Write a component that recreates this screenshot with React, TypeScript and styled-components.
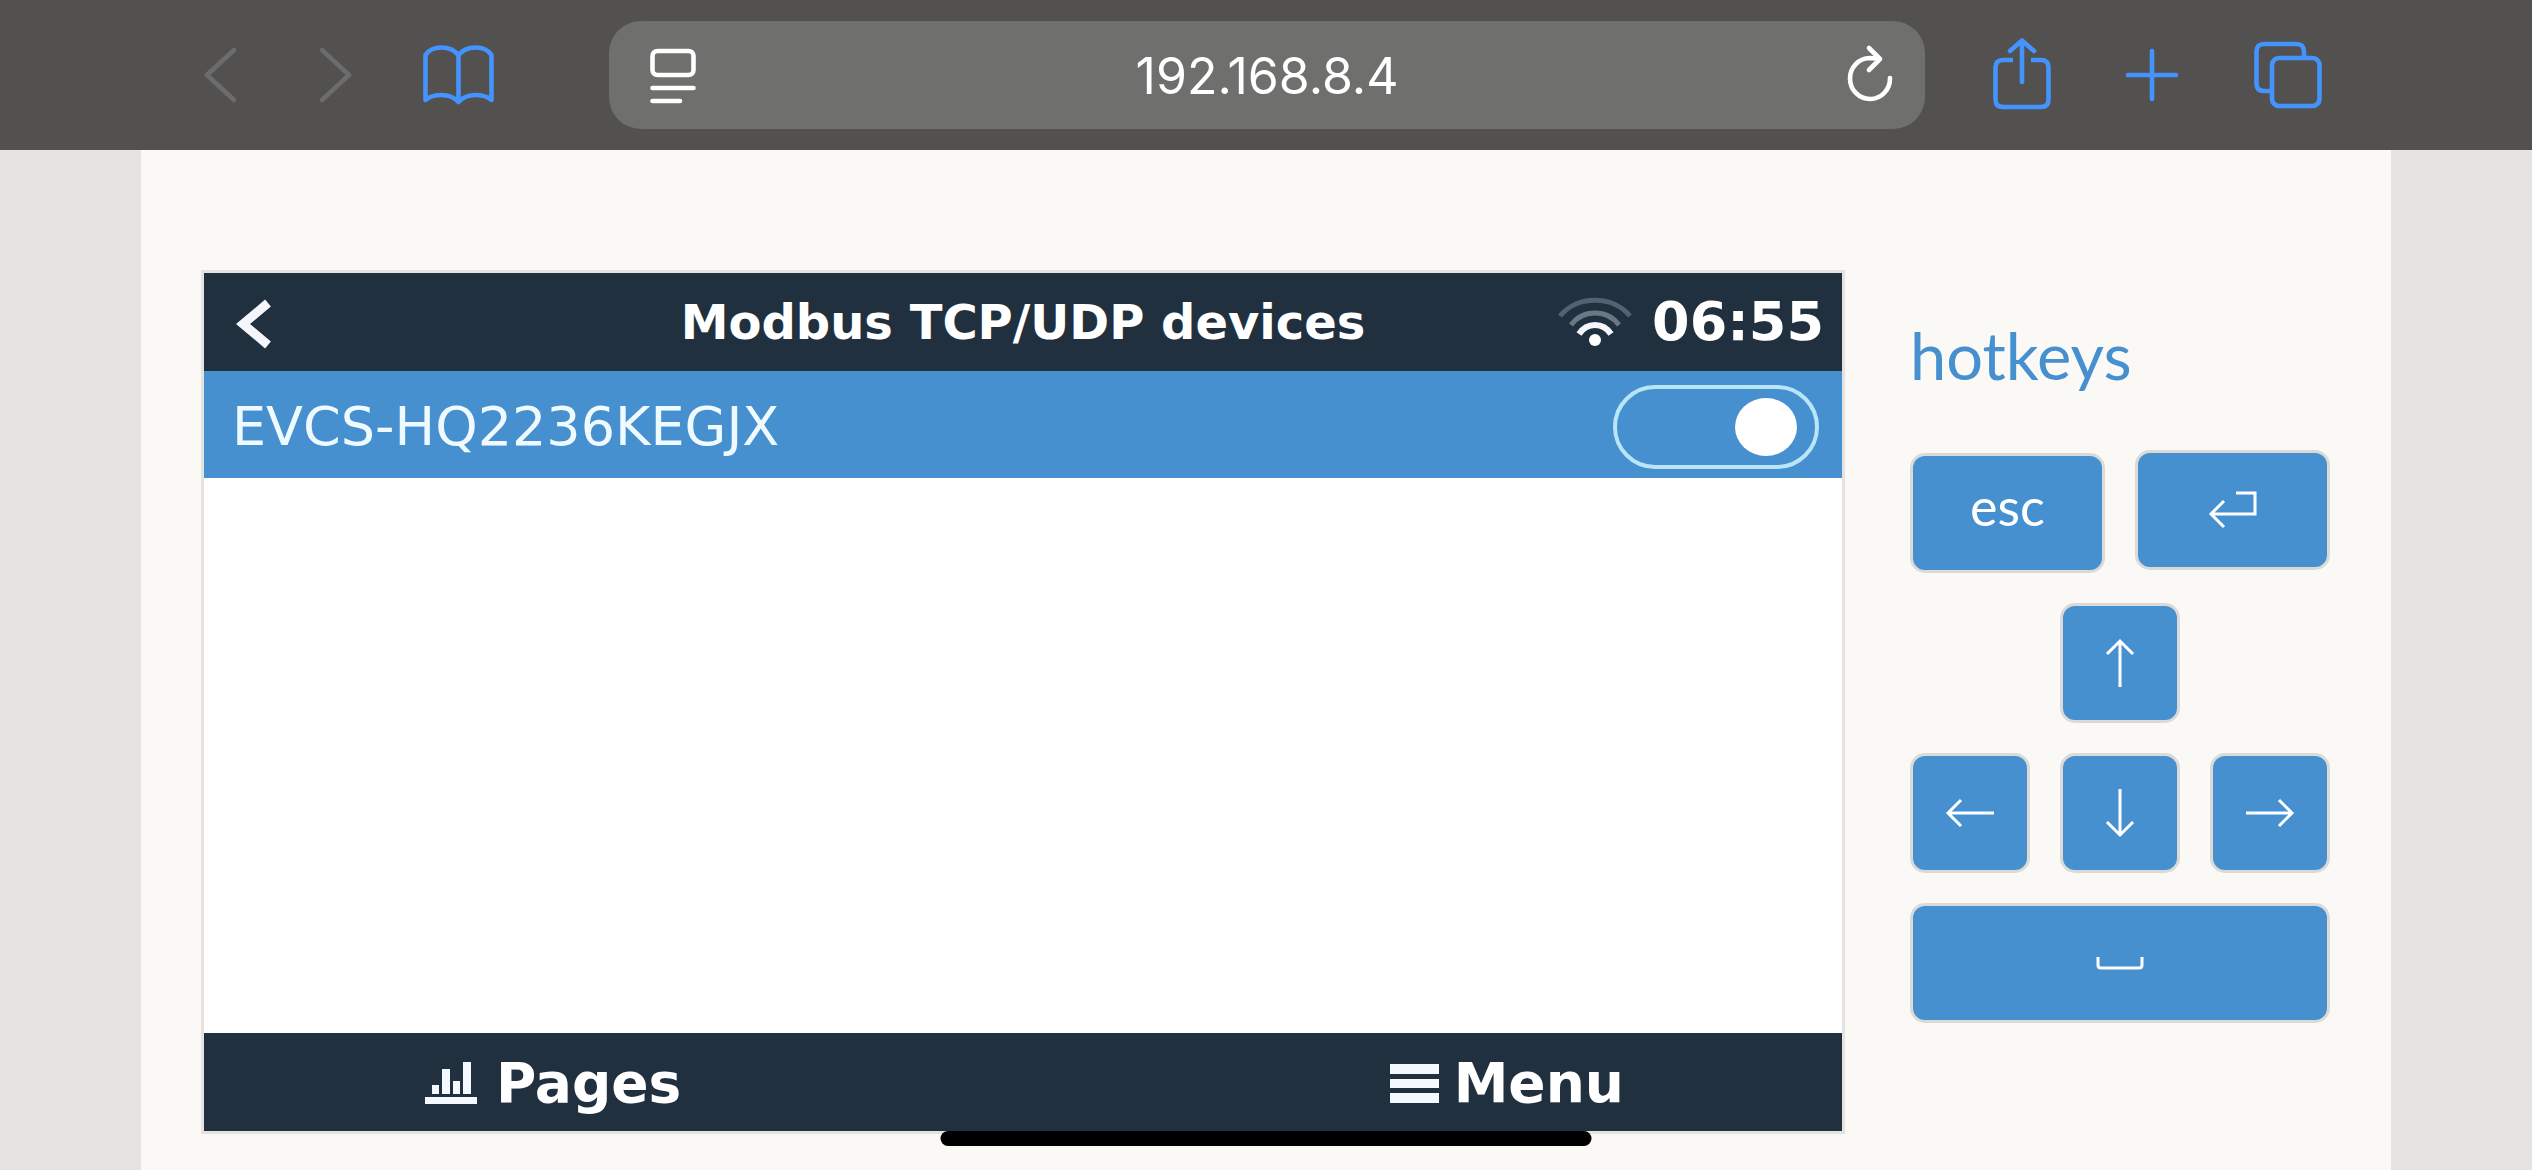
import React, { useState } from "react";
import styled, { createGlobalStyle } from "styled-components";

const color = {
  chrome: "#52514f",
  field: "#6f6f6d",
  link: "#4593fe",
  disabled: "#6c6c6c",
  page: "#e5e4e0",
  panel: "#faf9f5",
  frame: "#e4e3df",
  navy: "#21303f",
  blue: "#4690d0",
  keyBorder: "#dcdad7",
  white: "#ffffff",
};

const GlobalStyle = createGlobalStyle`
  * { box-sizing: border-box; }
  body { margin: 0; background: ${color.page}; }
  button, input { font: inherit; color: inherit; margin: 0; }
  button { padding: 0; border: 0; background: none; cursor: pointer; }
  svg { display: block; flex: none; }
`;

const Page = styled.div`
  min-height: 100vh;
  display: flex;
  flex-direction: column;
`;

/* Browser bar */

const BrowserBar = styled.header`
  height: 150px;
  padding: 0 202px 0 184px;
  display: flex;
  align-items: center;
  background: ${color.chrome};
  color: ${color.link};
`;

const IconGroup = styled.nav<{ $gap: number }>`
  display: flex;
  gap: ${(p) => p.$gap}px;
`;

const IconButton = styled.button<{ $wide?: boolean }>`
  width: ${(p) => (p.$wide ? 84 : 72)}px;
  height: 108px;
  display: flex;
  align-items: center;
  justify-content: center;

  &:disabled {
    color: ${color.disabled};
  }
`;

const AddressField = styled.div`
  flex: 1;
  min-width: 0;
  height: 108px;
  margin: 0 61px 0 109px;
  padding: 0 18px 0 28px;
  display: flex;
  align-items: center;
  border-radius: 32px;
  background: ${color.field};
  color: ${color.white};
`;

const AddressInput = styled.input`
  flex: 1;
  min-width: 0;
  height: 100%;
  padding: 2px 10px 0 0;
  border: 0;
  outline: 0;
  background: transparent;
  text-align: center;
  font-family: Inter, "Liberation Sans", sans-serif;
  font-size: 50px;
`;

const Stroke = styled.svg`
  fill: none;
  stroke: currentColor;
  stroke-width: 4.6;
  stroke-linecap: round;
  stroke-linejoin: round;
`;

/* Page content */

const Panel = styled.main`
  flex: 1;
  margin: 0 141px;
  padding: 120px 61px 36px 60px;
  display: flex;
  align-items: flex-start;
  gap: 65px;
  background: ${color.panel};
`;

const Screen = styled.section`
  flex: 1;
  min-width: 0;
  border: 3px solid ${color.frame};
  background: ${color.white};
  color: ${color.white};
  font-family: "DejaVu Sans", sans-serif;
  font-size: 54px;
`;

const ScreenHeader = styled.div`
  height: 98px;
  padding: 0 18px;
  display: grid;
  grid-template-columns: 1fr auto 1fr;
  align-items: center;
  background: ${color.navy};
`;

const BackButton = styled.button`
  justify-self: start;
  padding: 4px 14px 0;
`;

const ScreenTitle = styled.h1`
  margin: 0;
  font-size: 48px;
  line-height: 96px;
  font-weight: bold;
`;

const Status = styled.div`
  display: flex;
  align-items: center;
  justify-content: flex-end;
  gap: 20px;
  line-height: 96px;
  font-weight: bold;
`;

const DeviceList = styled.div`
  min-height: 662px;
`;

const DeviceRow = styled.label`
  height: 107px;
  padding: 4px 23px 0 28px;
  display: flex;
  align-items: center;
  justify-content: space-between;
  background: ${color.blue};
  color: #effaff;
  cursor: pointer;
`;

const Toggle = styled.input`
  appearance: none;
  width: 206px;
  height: 84px;
  padding: 0 18px;
  display: flex;
  align-items: center;
  border: 4px solid #b8e6f8;
  border-radius: 42px;

  &::before {
    content: "";
    width: 62px;
    height: 58px;
    border-radius: 50%;
    background: ${color.white};
  }

  &:checked {
    justify-content: flex-end;
  }
`;

const ScreenFooter = styled.div`
  height: 98px;
  padding: 2px 218px 0 221px;
  display: flex;
  justify-content: space-between;
  background: ${color.navy};
`;

const FooterButton = styled.button<{ $gap: number }>`
  display: flex;
  align-items: center;
  gap: ${(p) => p.$gap}px;
  font-size: 55px;
  font-weight: bold;
`;

/* Hotkeys */

const Hotkeys = styled.aside`
  width: 420px;
  padding-top: 44px;
  display: flex;
  flex-direction: column;
  gap: 30px;
  font-family: Lato, "Open Sans", sans-serif;
`;

const HotkeysTitle = styled.h2`
  margin: 0 0 24px;
  font-size: 65px;
  line-height: 82px;
  font-weight: 400;
  color: ${color.blue};
`;

const KeyRow = styled.div<{ $center?: boolean }>`
  display: flex;
  align-items: baseline;
  justify-content: ${(p) => (p.$center ? "center" : "space-between")};
`;

const keyWidth = { small: "120px", medium: "195px", full: "100%" };

const Key = styled.button<{ $size?: keyof typeof keyWidth; $text?: boolean }>`
  width: ${(p) => keyWidth[p.$size ?? "small"]};
  height: 120px;
  padding-bottom: ${(p) => (p.$text ? 14 : 0)}px;
  display: flex;
  align-items: center;
  justify-content: center;
  border: 3px solid ${color.keyBorder};
  border-radius: 15px;
  background: ${color.blue};
  color: ${color.white};
  font-size: 52px;
  line-height: 60px;
`;

const KeyIcon = styled.svg`
  overflow: visible;
  fill: none;
  stroke: currentColor;
  stroke-width: 3px;
`;

const HomeIndicator = styled.div`
  position: fixed;
  bottom: 24px;
  left: 50%;
  width: 651px;
  height: 15px;
  transform: translateX(-50%);
  border-radius: 8px;
  background: #000;
`;

const arrows = {
  Up: "M24 48V2M11 15L24 2L37 15",
  Left: "M48 24H2M15 11L2 24L15 37",
  Down: "M24 0V46M11 33L24 46L37 33",
  Right: "M0 24H46M33 11L46 24L33 37",
};

function ArrowKey({ direction }: { direction: keyof typeof arrows }) {
  return (
    <Key aria-label={direction}>
      <KeyIcon width="48" height="48" viewBox="0 0 48 48">
        <path d={arrows[direction]} />
      </KeyIcon>
    </Key>
  );
}

export default function App() {
  const [address, setAddress] = useState("192.168.8.4");
  const [enabled, setEnabled] = useState(true);

  return (
    <Page>
      <GlobalStyle />
      <BrowserBar>
        <IconGroup $gap={44} aria-label="History">
          <IconButton aria-label="Back" disabled>
            <Stroke width="32" height="74" viewBox="0 0 32 74">
              <path d="M30 12L3 37L30 62" />
            </Stroke>
          </IconButton>
          <IconButton aria-label="Forward" disabled>
            <Stroke width="32" height="74" viewBox="0 0 32 74">
              <path d="M2 12L29 37L2 62" />
            </Stroke>
          </IconButton>
          <IconButton aria-label="Bookmarks" $wide>
            <Stroke width="71" height="74" viewBox="0 0 71 74">
              <path d="M2.5 62V17C6 11.5 12 9.5 18.5 9.5S31 11.5 35.5 17C40 11.5 46 9.5 52.5 9.5S65 11.5 68.5 17V62C65 59 59 57 52.5 57S40 59 35.5 64C31 59 25 57 18.5 57S6 59 2.5 62ZM35.5 17V64" />
            </Stroke>
          </IconButton>
        </IconGroup>

        <AddressField>
          <IconButton as="span">
            <Stroke width="46" height="74" viewBox="0 0 46 74">
              <rect x="2.5" y="13" width="41" height="24" rx="5" />
              <path d="M2.5 50H43.5M2.5 63H30" />
            </Stroke>
          </IconButton>
          <AddressInput
            aria-label="Address"
            value={address}
            onChange={(e) => setAddress(e.target.value)}
          />
          <IconButton aria-label="Reload">
            <Stroke width="48" height="74" viewBox="0 0 48 74">
              <path d="M43 40A20 20.5 0 1 1 23 20L33 21M22 10L33 21L22 32" />
            </Stroke>
          </IconButton>
        </AddressField>

        <IconGroup $gap={58} aria-label="Page actions">
          <IconButton aria-label="Share">
            <Stroke width="58" height="74" viewBox="0 0 58 74">
              <path
                d="M20 22H10Q2.5 22 2.5 29.5V61.5Q2.5 69 10 69H48Q55.5 69 55.5 61.5V29.5Q55.5 22 48 22H38"
                strokeLinecap="butt"
              />
              <path d="M29 44V2.5M17 13L29 2.5L41 13" />
            </Stroke>
          </IconButton>
          <IconButton aria-label="New tab">
            <Stroke width="54" height="74" viewBox="0 0 54 74">
              <path d="M3 37H51M27 13V61" />
            </Stroke>
          </IconButton>
          <IconButton aria-label="Tabs" $wide>
            <Stroke width="68" height="74" viewBox="0 0 68 74">
              <path
                d="M50 20V13.5Q50 6 42.5 6H10Q2.5 6 2.5 13.5V45.5Q2.5 53 10 53H17"
                strokeLinecap="butt"
              />
              <rect x="18" y="20" width="47.5" height="48" rx="7" />
            </Stroke>
          </IconButton>
        </IconGroup>
      </BrowserBar>

      <Panel>
        <Screen>
          <ScreenHeader>
            <BackButton aria-label="Go back">
              <svg width="36" height="50" viewBox="0 0 36 50" fill="none" stroke="#f4f6fb" strokeWidth="9">
                <path d="M32 4L7 25L32 46" />
              </svg>
            </BackButton>
            <ScreenTitle>Modbus TCP/UDP devices</ScreenTitle>
            <Status>
              <svg width="74" height="50" viewBox="0 0 74 50" fill="none" strokeWidth="5">
                <path d="M2 19C19 -2 55 -2 72 19" stroke="#536170" />
                <path d="M13 28C25 12 49 12 61 28" stroke="#6a7785" />
                <path d="M21 37C29 25 45 25 53 37" stroke="#f4f6fb" strokeWidth="6" />
                <ellipse cx="37" cy="43" rx="6" ry="6" fill="#fff" />
              </svg>
              <span>06:55</span>
            </Status>
          </ScreenHeader>
          <DeviceList>
            <DeviceRow>
              EVCS-HQ2236KEGJX
              <Toggle
                type="checkbox"
                checked={enabled}
                onChange={(e) => setEnabled(e.target.checked)}
              />
            </DeviceRow>
          </DeviceList>
          <ScreenFooter>
            <FooterButton $gap={19}>
              <svg width="52" height="42" viewBox="0 0 52 42" fill="#f4f9ff">
                <path d="M0 35H52V42H0ZM7 23H14V32H7ZM17 7H25V32H17ZM28 19H35V32H28ZM38 0H46V32H38Z" />
              </svg>
              Pages
            </FooterButton>
            <FooterButton $gap={15}>
              <svg width="49" height="39" viewBox="0 0 49 39" fill="#f4f9ff">
                <path d="M0 0H49V10H0ZM0 15H49V24H0ZM0 29H49V39H0Z" />
              </svg>
              Menu
            </FooterButton>
          </ScreenFooter>
        </Screen>

        <Hotkeys>
          <HotkeysTitle>hotkeys</HotkeysTitle>
          <KeyRow>
            <Key $size="medium" $text>
              esc
            </Key>
            <Key $size="medium" aria-label="Enter">
              <KeyIcon width="48" height="32" viewBox="0 0 48 32">
                <path d="M27 -1H46V20H2M15 7L2 20L15 33" />
              </KeyIcon>
            </Key>
          </KeyRow>
          <KeyRow $center>
            <ArrowKey direction="Up" />
          </KeyRow>
          <KeyRow>
            <ArrowKey direction="Left" />
            <ArrowKey direction="Down" />
            <ArrowKey direction="Right" />
          </KeyRow>
          <KeyRow>
            <Key $size="full" aria-label="Space">
              <KeyIcon width="48" height="12" viewBox="0 0 48 12">
                <path d="M2 0V8Q2 11 5 11H43Q46 11 46 8V0" />
              </KeyIcon>
            </Key>
          </KeyRow>
        </Hotkeys>
      </Panel>
      <HomeIndicator />
    </Page>
  );
}
